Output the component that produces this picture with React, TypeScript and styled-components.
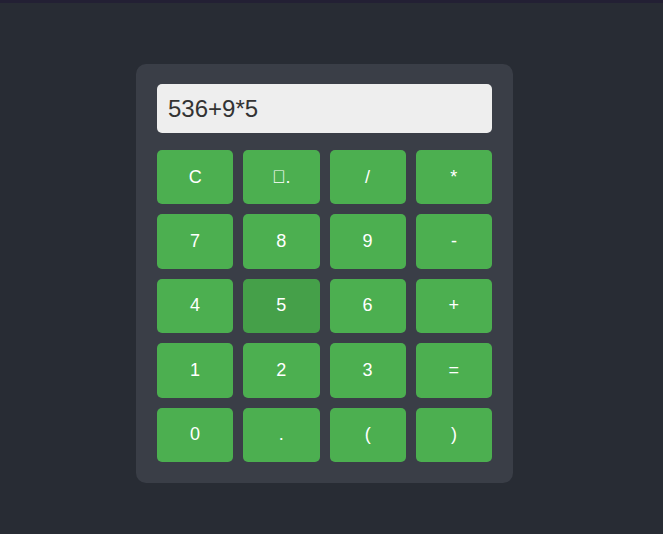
import React from "react";
import styled, { createGlobalStyle } from "styled-components";

const Global = createGlobalStyle`
  html, body { margin: 0; padding: 0; }
  body {
    background: #282c34;
    font-family: "Liberation Sans", Arial, sans-serif;
    border-top: 3px solid #232034;
    min-height: 531px;
  }
`;

const Page = styled.div`
  display: flex;
  justify-content: center;
  padding: 61px 14px 0 0;
`;

const Card = styled.div`
  width: 335px;
  background: #3a3e47;
  border-radius: 10px;
  padding: 20px 21px 21px 21px;
  display: flex;
  flex-direction: column;
  gap: 17px;
`;

const Display = styled.div`
  height: 49px;
  box-sizing: border-box;
  background: #eeeeee;
  border-radius: 5px;
  padding: 0 11px;
  display: flex;
  align-items: center;
  font-size: 24px;
  color: #333333;
`;

const Keys = styled.div`
  display: grid;
  grid-template-columns: repeat(4, 1fr);
  grid-auto-rows: 54.4px;
  column-gap: 10px;
  row-gap: 10px;
`;

const Key = styled.button<{ $active?: boolean }>`
  border: none;
  border-radius: 5px;
  background: ${(p) => (p.$active ? "#45a049" : "#4caf50")};
  color: #ffffff;
  font-family: "Liberation Sans", Arial, sans-serif;
  font-size: 18px;
  padding: 0;
  cursor: pointer;
`;

const keys = [
  "C", "\uE000.", "/", "*",
  "7", "8", "9", "-",
  "4", "5", "6", "+",
  "1", "2", "3", "=",
  "0", ".", "(", ")",
];

export default function App() {
  return (
    <>
      <Global />
      <Page>
        <Card>
          <Display>536+9*5</Display>
          <Keys>
            {keys.map((k, i) => (
              <Key key={i} $active={k === "5"}>
                {k}
              </Key>
            ))}
          </Keys>
        </Card>
      </Page>
    </>
  );
}
